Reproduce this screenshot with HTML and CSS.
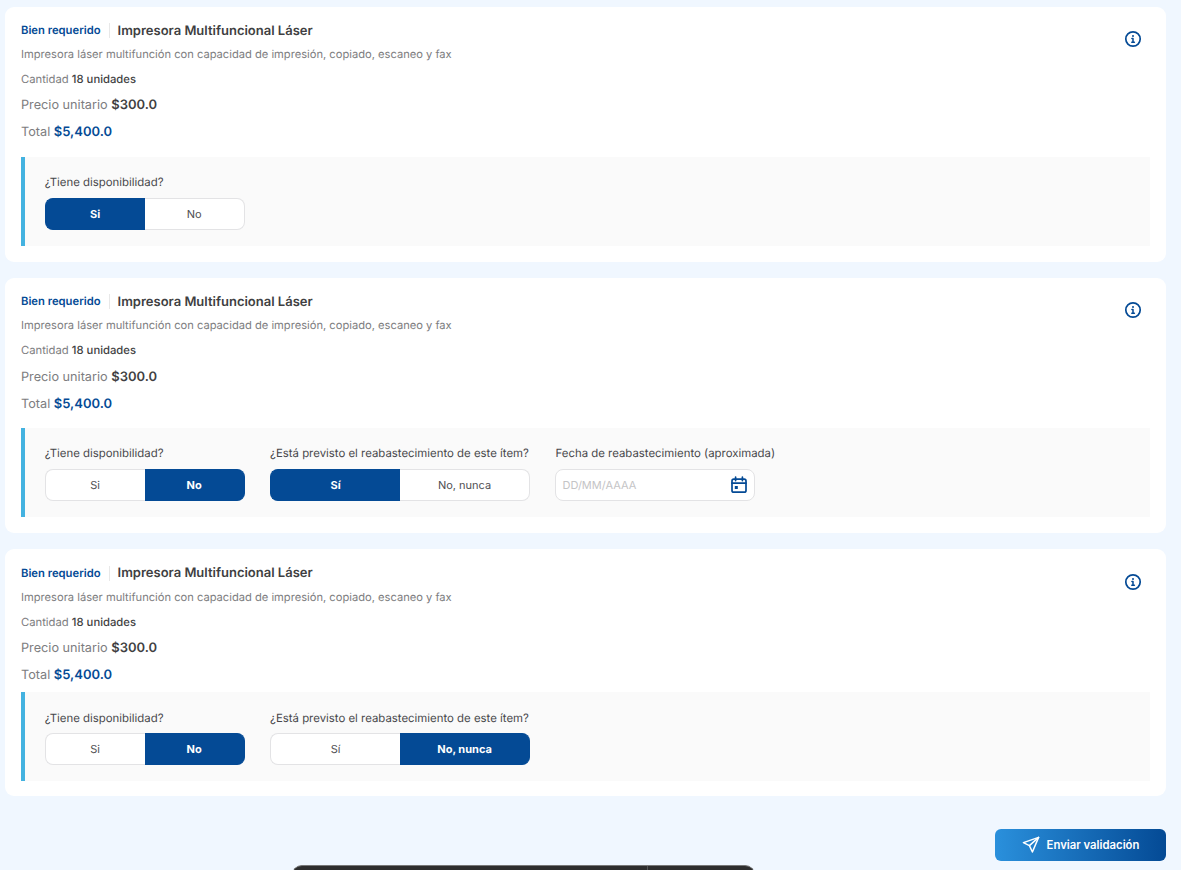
FILE: index.html
```html
<!DOCTYPE html>
<html lang="es">
<head>
<meta charset="utf-8">
<title>Validación</title>
<link rel="stylesheet" href="styles.css">
</head>
<body>
<svg class="defs" width="0" height="0" aria-hidden="true">
  <symbol id="info" viewBox="0 0 18 18">
    <circle cx="9" cy="9" r="7.2" fill="none" stroke="currentColor" stroke-width="1.7"/>
    <path d="M7.9 8.4H9v3.6M7.8 12.2h2.6" fill="none" stroke="currentColor" stroke-width="1.5" stroke-linecap="round" stroke-linejoin="round"/>
    <circle cx="9" cy="5.9" r="1" fill="currentColor"/>
  </symbol>
</svg>
<main class="page">
  <section class="card">
    <div class="head">
      <div class="info-col">
        <div class="title-row"><span class="tag">Bien requerido</span><span class="name">Impresora Multifuncional Láser</span></div>
        <p class="desc">Impresora láser multifunción con capacidad de impresión, copiado, escaneo y fax</p>
        <p class="qty">Cantidad <span>18 unidades</span></p>
        <p class="price">Precio unitario <strong>$300.0</strong></p>
        <p class="price total">Total <strong>$5,400.0</strong></p>
      </div>
      <svg class="info"><use href="#info"/></svg>
    </div>
    <div class="panel">
      <div class="field">
        <span class="label">¿Tiene disponibilidad?</span>
        <div class="toggle"><span class="opt on">Si</span><span class="opt">No</span></div>
      </div>
    </div>
  </section>

  <section class="card">
    <div class="head">
      <div class="info-col">
        <div class="title-row"><span class="tag">Bien requerido</span><span class="name">Impresora Multifuncional Láser</span></div>
        <p class="desc">Impresora láser multifunción con capacidad de impresión, copiado, escaneo y fax</p>
        <p class="qty">Cantidad <span>18 unidades</span></p>
        <p class="price">Precio unitario <strong>$300.0</strong></p>
        <p class="price total">Total <strong>$5,400.0</strong></p>
      </div>
      <svg class="info"><use href="#info"/></svg>
    </div>
    <div class="panel">
      <div class="field">
        <span class="label">¿Tiene disponibilidad?</span>
        <div class="toggle"><span class="opt">Si</span><span class="opt on">No</span></div>
      </div>
      <div class="field">
        <span class="label">¿Está previsto el reabastecimiento de este ítem?</span>
        <div class="toggle wide"><span class="opt on">Sí</span><span class="opt">No, nunca</span></div>
      </div>
      <div class="field">
        <span class="label">Fecha de reabastecimiento (aproximada)</span>
        <div class="date">
          <span class="ph">DD/MM/AAAA</span>
          <svg class="cal" viewBox="0 0 18 18" fill="none" stroke="currentColor" stroke-width="1.7">
            <rect x="2" y="3.2" width="14" height="13" rx="1.8"/>
            <path d="M2 7.2h14M5.6 1.2v3.4M12.4 1.2v3.4" stroke-linecap="round"/>
            <rect x="4.8" y="10" width="3" height="3" fill="currentColor" stroke="none"/>
          </svg>
        </div>
      </div>
    </div>
  </section>

  <section class="card compact">
    <div class="head">
      <div class="info-col">
        <div class="title-row"><span class="tag">Bien requerido</span><span class="name">Impresora Multifuncional Láser</span></div>
        <p class="desc">Impresora láser multifunción con capacidad de impresión, copiado, escaneo y fax</p>
        <p class="qty">Cantidad <span>18 unidades</span></p>
        <p class="price">Precio unitario <strong>$300.0</strong></p>
        <p class="price total">Total <strong>$5,400.0</strong></p>
      </div>
      <svg class="info"><use href="#info"/></svg>
    </div>
    <div class="panel">
      <div class="field">
        <span class="label">¿Tiene disponibilidad?</span>
        <div class="toggle"><span class="opt">Si</span><span class="opt on">No</span></div>
      </div>
      <div class="field">
        <span class="label">¿Está previsto el reabastecimiento de este ítem?</span>
        <div class="toggle wide"><span class="opt">Sí</span><span class="opt on">No, nunca</span></div>
      </div>
    </div>
  </section>

  <div class="actions">
    <button class="send" type="button">
      <svg class="plane" viewBox="0 0 18 18" fill="none" stroke="currentColor" stroke-width="1.5" stroke-linejoin="round" stroke-linecap="round">
        <path d="M16.6 1.4 1.4 6.6l6 3 3 6.4z"/>
        <path d="M16.6 1.4 7.4 9.6"/>
      </svg>
      Enviar validación
    </button>
  </div>
</main>
<div class="dock"><span class="dock-sep"></span></div>
</body>
</html>
```
FILE: styles.css
```css
* { box-sizing: border-box; }
html, body { margin: 0; height: 870px; overflow: hidden; }
body {
  background: #f0f7ff;
  font-family: Inter, "Liberation Sans", sans-serif;
  color: #3f3f42;
  text-rendering: geometricPrecision;
}
.defs { position: absolute; }
p { margin: 0; }
.page {
  width: 1161px;
  margin-left: 5px;
  padding-top: 7px;
  display: flex;
  flex-direction: column;
  gap: 16px;
}
.card {
  background: #fff;
  border-radius: 9px;
  padding: 16px;
  height: 255.2px;
}
.card.compact { height: 247px; padding-top: 16.4px; }
.head { display: flex; justify-content: space-between; }
.info-col { display: flex; flex-direction: column; }
.title-row { display: flex; align-items: center; height: 15px; }
.tag {
  font-size: 11.25px;
  font-weight: 600;
  color: #044a95;
  padding-right: 8px;
  border-right: 1px solid #e8e8e8;
  line-height: 15px;
}
.name { font-size: 13px; font-weight: 600; margin-left: 8px; color: #3f3f42; }
.desc { font-size: 11.15px; color: #7d7d80; margin-top: 9.1px; line-height: 14px; }
.qty { font-size: 11.25px; color: #7d7d80; margin-top: 11px; line-height: 14px; }
.qty span { color: #3f3f42; font-weight: 500; }
.price { font-size: 12.7px; color: #7d7d80; margin-top: 11.3px; line-height: 16px; }
.price strong { font-size: 13px; font-weight: 600; color: #3f3f42; }
.total { margin-top: 10px; }
.total strong { color: #044a95; }
.info { width: 18px; height: 18px; color: #044a95; margin: 7px 7.6px 0 0; }
.panel {
  display: flex;
  gap: 25.4px;
  height: 89px;
  margin-top: 15.3px;
  padding: 18.6px 19.7px 0;
  background: #fafafa;
  border-left: 4px solid #43b2e0;
}
.compact .panel { margin-top: 7.8px; }
.field { display: flex; flex-direction: column; gap: 8.4px; }
.label { font-size: 11.4px; line-height: 14px; color: #47474a; }
.toggle {
  display: flex;
  width: 200px;
  height: 32px;
}
.toggle.wide { width: 260px; }
.opt {
  flex: 1;
  display: flex;
  align-items: center;
  justify-content: center;
  font-size: 11px;
  color: #505053;
  background: #fff;
  border: 1px solid #e3e3e5;
}
.opt:first-child { border-radius: 8px 0 0 8px; border-right: 0; }
.opt:last-child { border-radius: 0 8px 8px 0; border-left: 0; }
.opt.on { background: #044a95; border-color: #044a95; color: #fff; font-weight: 700; }
.date {
  display: flex;
  align-items: center;
  justify-content: space-between;
  width: 200px;
  height: 32px;
  padding: 0 6px 0 6px;
  background: #fff;
  border: 1px solid #e3e3e5;
  border-radius: 8px;
}
.ph { font-size: 11px; color: #c4c4c6; }
.cal { width: 18px; height: 18px; color: #044a95; }
.actions { display: flex; justify-content: flex-end; margin-top: 16.4px; }
.send {
  display: flex;
  align-items: center;
  justify-content: center;
  gap: 7px;
  width: 171px;
  height: 32px;
  padding: 1px 0 0;
  border: 0;
  border-radius: 6px;
  background: linear-gradient(90deg, #2a90dc, #044a95);
  color: #fff;
  font: 600 11.3px Inter, "Liberation Sans", sans-serif;
}
.plane { width: 18px; height: 18px; }
.dock {
  position: fixed;
  left: 292px;
  top: 865px;
  width: 463px;
  height: 40px;
  background: #2e2e2e;
  border-top: 1px solid #777;
  border-radius: 10px 10px 0 0;
}
.dock-sep {
  position: absolute;
  left: 355px;
  top: 0;
  width: 1px;
  height: 40px;
  background: #555;
}
```
